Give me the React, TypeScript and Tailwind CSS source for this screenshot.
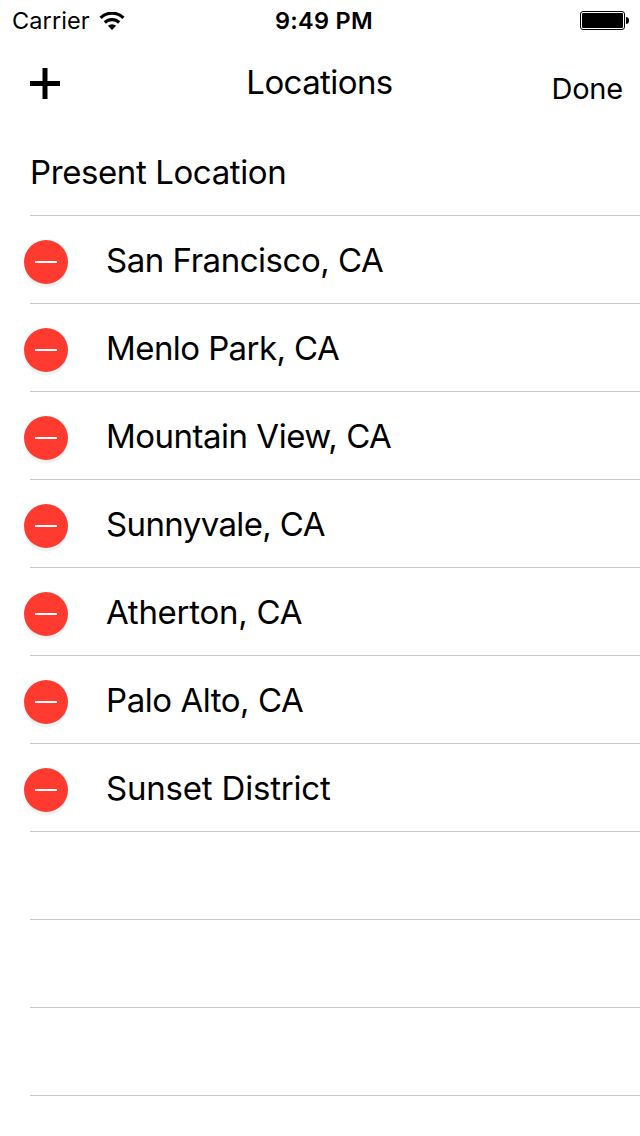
const locations = [
  { name: "San Francisco, CA", tracking: "tracking-[-0.47px]" },
  { name: "Menlo Park, CA", tracking: "tracking-[-0.58px]" },
  { name: "Mountain View, CA", tracking: "tracking-[-0.5px]" },
  { name: "Sunnyvale, CA", tracking: "tracking-[-0.62px]" },
  { name: "Atherton, CA", tracking: "tracking-[-0.27px]" },
  { name: "Palo Alto, CA", tracking: "tracking-[-0.45px]" },
  { name: "Sunset District", tracking: "tracking-[-0.2px]" },
];

const row = "flex h-22 shrink-0 items-center border-b border-[#c8c7cc]";

function WifiIcon() {
  return (
    <svg width="26" height="18" viewBox="0 0 26 18" fill="none" stroke="black" strokeWidth="3.3">
      <path d="M1.6 5.9a16.2 16.2 0 0 1 22.8 0M5.8 10.5a10.4 10.4 0 0 1 14.4 0" />
      <path d="M13 18l-4.1-4.2a6 6 0 0 1 8.2 0z" fill="black" stroke="none" />
    </svg>
  );
}

function BatteryIcon() {
  return (
    <svg width="49" height="19" viewBox="0 0 49 19">
      <rect x="0.5" y="0.5" width="44" height="18" rx="2.5" fill="none" stroke="black" />
      <rect x="2" y="2" width="41" height="15" rx="1" />
      <path d="M46 6a3 3.5 0 0 1 3 3.5a3 3.5 0 0 1-3 3.5z" />
    </svg>
  );
}

function RemoveButton() {
  return (
    <button
      aria-label="Remove"
      className="-ml-1.5 mt-1 flex size-11 shrink-0 items-center justify-center rounded-full bg-[#ff3b30] shadow-[0_4px_0_-0.5px_#f2f2f2]"
    >
      <span className="h-0.5 w-[22px] bg-white" />
    </button>
  );
}

export default function App() {
  return (
    <div className="flex h-[1136px] w-[640px] flex-col overflow-hidden bg-white font-['Inter',sans-serif] text-black">
      <header className="grid h-10 grid-cols-3 items-center pl-3 pr-[11px] pt-px text-[23.5px]">
        <div className="flex items-center gap-[9px]">
          <span className="tracking-[0.1px]">Carrier</span>
          <WifiIcon />
        </div>
        <span className="pl-[7px] text-center font-semibold tracking-[0.3px]">9:49 PM</span>
        <div className="justify-self-end">
          <BatteryIcon />
        </div>
      </header>
      <nav className="grid h-22 grid-cols-3 items-center pb-0.5 pl-[30px] pr-[17px]">
        <button aria-label="Add" className="size-[31px]">
          <svg width="31" height="31" viewBox="0 0 31 31" fill="none" stroke="black" strokeWidth="5">
            <path d="M15 0v31M0 15.5h30" />
          </svg>
        </button>
        <h1 className="-ml-[14px] text-center text-[33px] tracking-[-0.6px]">Locations</h1>
        <button className="mt-[11px] text-right text-[29px] tracking-[-0.2px]">Done</button>
      </nav>
      <main className="ml-[30px] flex flex-col text-[33px]">
        <div className={row}>
          <span className="mt-[3px] tracking-[-0.4px]">Present Location</span>
        </div>
        {locations.map((l) => (
          <div key={l.name} className={row}>
            <RemoveButton />
            <span className={`ml-[38px] mt-[3px] ${l.tracking}`}>{l.name}</span>
          </div>
        ))}
        <div className={row} />
        <div className={row} />
        <div className={row} />
      </main>
    </div>
  );
}
